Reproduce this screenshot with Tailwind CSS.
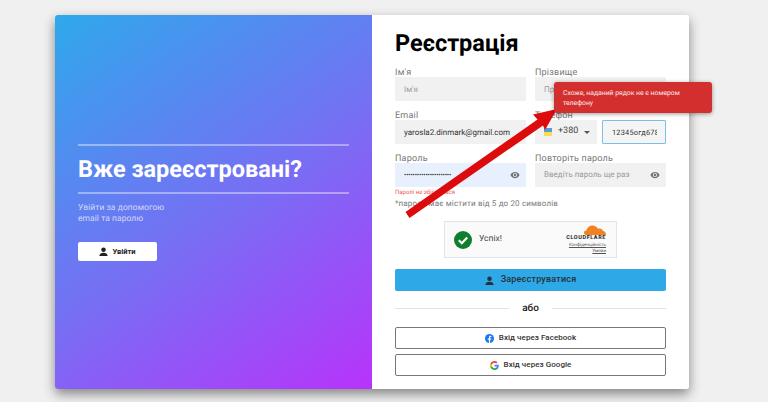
<!DOCTYPE html>
<html lang="uk">
    <head>
        <meta charset="UTF-8">
        <meta name="viewport" content="width=device-width, initial-scale=1.0">
        <title>Реєстрація</title>
        <script src="https://cdn.jsdelivr.net/npm/@tailwindcss/browser@4"></script>
    </head>
    <body class="relative w-[768px] h-[402px] overflow-hidden bg-[#f0f0f0] font-['Roboto',sans-serif] text-[#212121] [text-rendering:geometricPrecision]">
        <div class="pt-[15px] pl-[55px]">
            <div class="flex w-[634px] h-[374px] rounded-[3px] overflow-hidden shadow-[0_5px_12px_rgba(0,0,0,0.45)]">
                <!-- Left panel -->
                <section class="w-[317px] flex flex-col px-[23px] pt-[129px] bg-[linear-gradient(145deg,#2ea9ec_0%,#7a6cf4_55%,#b833fb_100%)]">
                    <div class="h-[2px] w-[271px] bg-white/40"></div>
                    <h2 class="h-[46px] leading-[46px] text-[23.5px] font-bold text-white whitespace-nowrap">Вже зареєстровані?</h2>
                    <div class="h-[2px] w-[271px] bg-white/40"></div>
                    <p class="mt-[9px] text-[8.5px] leading-[11px] tracking-[0.05px] text-white/70">Увійти за допомогою<br>email та паролю</p>
                    <button class="mt-[17px] w-[79px] h-[19px] flex items-center justify-center gap-[4px] bg-white rounded-[2px] text-[7.5px] font-bold">
                        <svg class="w-[9px] h-[9px]" viewBox="0 0 24 24" fill="#212121"><circle cx="12" cy="7" r="6"/><path d="M1 24c0-6 5-9 11-9s11 3 11 9z"/></svg>
                        Увійти
                    </button>
                </section>

                <!-- Right panel -->
                <section class="w-[317px] bg-white pl-[23px] pr-[23px]">
                    <h1 class="h-[52px] pt-[11px] leading-[35px] text-[23.5px] font-bold text-black">Реєстрація</h1>
                    <div class="grid grid-cols-[131px_131px] gap-x-[9px] text-[9px] text-[#777]">
                        <div class="h-[10px] leading-[12px] tracking-[0.2px]">Ім'я</div>
                        <div class="h-[10px] leading-[12px] tracking-[0.2px]">Прізвище</div>
                        <div class="h-[24px] bg-[#f1f1f1] pl-[9px] leading-[25px] text-[#9a9a9a] text-[8px]">Ім'я</div>
                        <div class="h-[24px] bg-[#f1f1f1] pl-[9px] leading-[25px] text-[#9a9a9a] text-[8px]">Прізвище</div>

                        <div class="mt-[9px] h-[10px] leading-[12px] tracking-[0.2px]">Email</div>
                        <div class="mt-[9px] h-[10px] leading-[12px] tracking-[0.2px]">Телефон</div>
                        <div class="h-[24px] bg-[#f1f1f1] pl-[9px] leading-[25px] text-[8px] text-[#333]">yarosla2.dinmark@gmail.com</div>
                        <div class="flex gap-[5px] h-[24px]">
                            <div class="w-[62px] bg-[#f1f1f1] flex items-center pl-[9px] text-[9px] text-[#444]">
                                <span class="w-[8px] h-[8px] flex flex-col mr-[6px]"><span class="h-1/2 bg-[#5b9bd5]"></span><span class="h-1/2 bg-[#f7e04f]"></span></span>
                                +380
                                <span class="ml-[6px] w-0 h-0 border-x-[3px] border-x-transparent border-t-[3px] border-t-[#555]"></span>
                            </div>
                            <div class="w-[64px] border border-[#7cc0ea] rounded-[1px] bg-[#f5f5f5] pl-[9px] pr-[8px] leading-[23px] text-[7.4px] text-[#333] tracking-[0.2px]">
                                <div class="overflow-hidden whitespace-nowrap">12345огд678</div>
                            </div>
                        </div>

                        <div class="mt-[9px] h-[10px] leading-[12px] tracking-[0.2px]">Пароль</div>
                        <div class="mt-[9px] h-[10px] leading-[12px] tracking-[0.2px]">Повторіть пароль</div>
                        <div class="h-[24px] bg-[#e8f0fe] flex items-center justify-between pl-[9px] pr-[6px]">
                            <span class="text-[7px] tracking-[-0.22px] text-[#333]">••••••••••••••••••••••</span>
                            <svg class="w-[10px] h-[10px]" viewBox="0 0 24 24" fill="#757575"><path d="M12 4.500C7 4.500 2.700 7.600 1 12c1.700 4.400 6 7.500 11 7.500s9.300-3.100 11-7.500c-1.700-4.400-6-7.500-11-7.500zM12 17a5 5 0 1 1 0-10 5 5 0 0 1 0 10zm0-8a3 3 0 1 0 0 6 3 3 0 0 0 0-6z"/></svg>
                        </div>
                        <div class="h-[24px] bg-[#f1f1f1] flex items-center justify-between pl-[9px] pr-[6px]">
                            <span class="text-[8px] text-[#9a9a9a] whitespace-nowrap">Введіть пароль ще раз</span>
                            <svg class="w-[10px] h-[10px]" viewBox="0 0 24 24" fill="#757575"><path d="M12 4.500C7 4.500 2.700 7.600 1 12c1.700 4.400 6 7.500 11 7.500s9.300-3.100 11-7.500c-1.700-4.400-6-7.500-11-7.500zM12 17a5 5 0 1 1 0-10 5 5 0 0 1 0 10zm0-8a3 3 0 1 0 0 6 3 3 0 0 0 0-6z"/></svg>
                        </div>
                    </div>
                    <p class="mt-[1px] h-[9px] leading-[9px] text-[6px] text-[#ef5350]">Паролі не збігаються</p>
                    <p class="mt-[2px] h-[10px] leading-[10px] text-[8px] tracking-[0.15px] text-[#7a7a7a]">*пароль має містити від 5 до 20 символів</p>

                    <!-- Turnstile -->
                    <div class="mt-[12px] ml-[49px] w-[173px] h-[37px] flex items-center justify-between pl-[9px] pr-[10px] bg-[#fafafa] border border-[#e4e4e4]">
                        <div class="flex items-center gap-[7px] text-[8.5px] text-[#444]">
                            <svg class="w-[18px] h-[18px]" viewBox="0 0 18 18"><circle cx="9" cy="9" r="9" fill="#0f7f2e"/><path d="M4.800 9.200l3 3 5.400-5.600" fill="none" stroke="#fff" stroke-width="2.200"/></svg>
                            Успіх!
                        </div>
                        <div class="flex flex-col items-end">
                            <svg class="w-[22px] h-[10px]" viewBox="0 0 22 10"><path d="M3 10c-1.500 0-3-.8-3-2.300 0-1.300 1-2.200 2.300-2.200C3 2.500 5.500.5 8.500.5c2.500 0 4.500 1.300 5.500 3.300 2.500-.8 4.500.2 5 2.200 1.500 0 3 1 3 4z" fill="#f48120"/></svg>
                            <span class="text-[5.500px] leading-[6px] font-bold tracking-[0.6px] text-[#222]">CLOUDFLARE</span>
                            <span class="mt-[2px] text-[4.500px] leading-[5px] underline text-[#555]">Конфіденційність</span>
                            <span class="mt-[1px] text-[4.500px] leading-[5px] underline text-[#555]">Умови</span>
                        </div>
                    </div>

                    <button class="mt-[11px] w-[271px] h-[22px] flex items-center justify-center gap-[7px] bg-[#2ea8e6] rounded-[2px] text-[9px] font-medium tracking-[0.2px] text-[#263238]">
                        <svg class="w-[9px] h-[9px]" viewBox="0 0 24 24" fill="#263238"><circle cx="12" cy="7" r="6"/><path d="M1 24c0-6 5-9 11-9s11 3 11 9z"/></svg>
                        Зареєструватися
                    </button>

                    <div class="mt-[11px] flex items-center w-[271px] h-[12px]">
                        <div class="flex-1 h-px bg-[#e2e2e2]"></div>
                        <span class="w-[43px] text-center text-[10px] font-medium">або</span>
                        <div class="flex-1 h-px bg-[#e2e2e2]"></div>
                    </div>

                    <button class="mt-[13px] w-[271px] h-[22px] flex items-center justify-center gap-[5px] border border-[#777] rounded-[2px] text-[8px] font-medium tracking-[0.05px] text-[#333]">
                        <svg class="w-[9px] h-[9px]" viewBox="0 0 24 24"><circle cx="12" cy="12" r="12" fill="#1877f2"/><path d="M16.500 15.500l.5-3.500h-3.500V9.800c0-1 .5-1.900 2-1.900H17V5c-2.500-.5-6.500-.8-6.500 4.300V12H7.500v3.500h3V24h3v-8.500z" fill="#fff"/></svg>
                        Вхід через Facebook
                    </button>
                    <button class="mt-[5px] w-[271px] h-[22px] flex items-center justify-center gap-[5px] border border-[#777] rounded-[2px] text-[8px] font-medium tracking-[0.05px] text-[#333]">
                        <svg class="w-[9px] h-[9px]" viewBox="0 0 24 24"><path fill="#4285f4" d="M23.500 12.300c0-.8-.1-1.600-.2-2.300H12v4.500h6.500c-.3 1.500-1.100 2.700-2.400 3.600v3h3.900c2.200-2.100 3.500-5.200 3.500-8.800z"/><path fill="#34a853" d="M12 24c3.200 0 6-1.100 8-2.900l-3.900-3c-1.100.7-2.500 1.200-4.100 1.200-3.100 0-5.800-2.100-6.700-5H1.300v3.100C3.300 21.300 7.300 24 12 24z"/><path fill="#fbbc05" d="M5.300 14.300c-.5-1.500-.5-3.100 0-4.600V6.600h-4c-1.700 3.300-1.700 7.500 0 10.800z"/><path fill="#ea4335" d="M12 4.700c1.800 0 3.300.6 4.600 1.800L20 3.100C17.900 1.200 15.200 0 12 0 7.300 0 3.300 2.700 1.300 6.600l4 3.100c.9-2.900 3.600-5 6.700-5z"/></svg>
                        Вхід через Google
                    </button>
                </section>
            </div>
        </div>

        <!-- Annotation arrow -->
        <svg class="absolute left-0 top-0 pointer-events-none" width="768" height="402" viewBox="0 0 768 402">
            <path d="M405.500 212 L409.500 218 L543 125.500 L545 130 L557 109 L533 114.500 L537.500 119.500 Z" fill="#dd0b0b"/>
        </svg>

        <!-- Toast -->
        <div class="absolute left-[554px] top-[82px] w-[158px] h-[31px] rounded-[3px] bg-[#d32f2f] pl-[9px] pr-[8px] pt-[6px] text-[6.8px] leading-[10px] text-white/90 shadow-[0_1px_4px_rgba(0,0,0,0.4)]">Схоже, наданий рядок не є номером телефону</div>
    </body>
</html>
